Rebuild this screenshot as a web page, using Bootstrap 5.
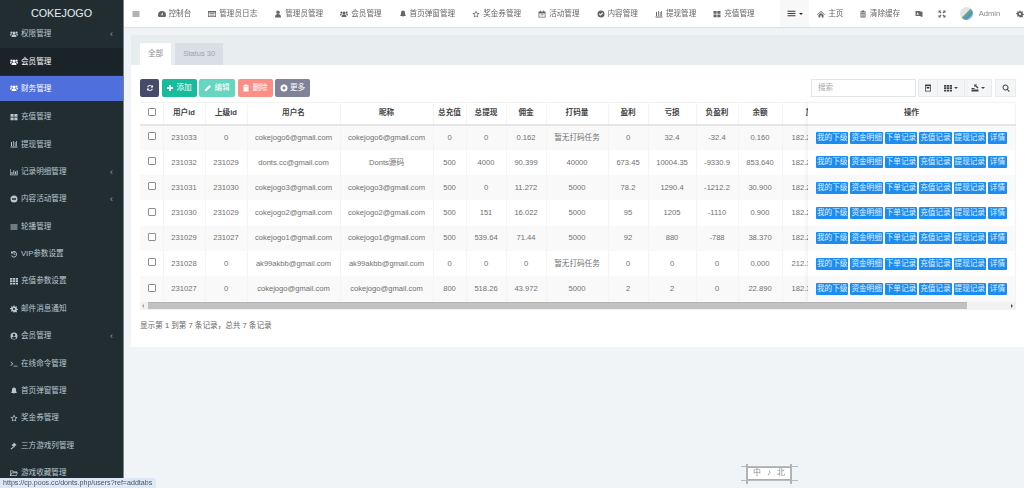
<!DOCTYPE html>
<html lang="zh-CN">
<head>
  <meta charset="UTF-8" />
  <title>COKEJOGO</title>
  <link href="https://cdn.jsdelivr.net/npm/bootstrap@5.3.3/dist/css/bootstrap.min.css" rel="stylesheet" />
  <style>
    html, body { height: 488px; overflow: hidden; }
    body { background: #f1f4f6; font: 7.6px/1.3 "Liberation Sans", "Noto Sans CJK SC", sans-serif; color: #666; }
    .ic { width: 8px; height: 8px; fill: currentColor; flex: none; }
    .soft { filter: blur(.35px); }

    .side { width: 124px; height: 488px; background: #222d32; border-right: 1px solid #7d8487; color: #b8c7ce; flex: none; overflow: hidden; }
    .side-logo { height: 27px; line-height: 26px; text-align: center; color: #e8eef0; font-size: 10.8px; }
    .side-item { height: 27.4px; padding-left: 10px; padding-right: 10px; gap: 3px; color: #b8c7ce; }
    .side-first { height: 21px; padding-bottom: 7px; }
    .side-hover { background: #1a2327; color: #fff; }
    .side-on { background: #4e6fdc; color: #fff; height: 25px; margin-top: .6px; margin-bottom: 2.4px; }
    .side-arrow { margin-left: auto; margin-top: 2px; color: #8aa4af; font-size: 9px; }

    .top { height: 27px; background: #fff; box-shadow: 0 1px 1px rgba(0,0,0,.08); color: #666; overflow: hidden; white-space: nowrap; }
    .top-item { padding: 0 8.5px; gap: 3px; height: 27px; }
    .top-first { padding: 0 9px 0 8px; }
    .top-burger { margin-left: 17px; padding: 0 6px 0 7px; background: #f8f8f8; color: #333; }
    .top-burger .ic { width: 9px; height: 9px; }
    .top-home { padding: 0 8px; }
    .top-clear { padding: 0 7.5px 0 7.5px; }
    .top-ico { padding: 0 7.5px; }
    .top-admin { gap: 6px; padding: 0 8px 0 6px; color: #888; }
    .top-gear { padding: 0 0 0 8px; }
    .caret-dn { width: 0; height: 0; border: 2px solid transparent; border-top-color: currentColor; border-bottom: 0; }
    .top-ava { width: 13px; height: 13px; border-radius: 50%; background: linear-gradient(135deg, #dfe5e8 45%, #6fae6a 50%, #4d8fcb 70%, #f4f6f7); }

    .panel { margin: 8px 0 0 7px; height: 312px; background: #fff; }
    .panel-tabs { height: 30px; background: #e8edf0; padding: 8px 0 0 9px; border: 0; gap: 4px; }
    .panel-tabs .nav-link { height: 22px; padding: 0 8px; line-height: 22px; font-size: 7.6px; border: 0; border-radius: 0; background: #d9dfe5; color: #99a3ad; margin: 0; }
    .panel-tabs .nav-link.active { background: #fff; color: #8b8b8b; }
    .panel-body { padding: 14px 8px 0 9px; }

    .tool-left { gap: 2.5px; }
    .tool-btn { height: 18px; padding: 0; font-size: 7.6px; color: #fff; border: 0; border-radius: 2px; gap: 2px; white-space: nowrap; justify-content: center; }
    .b-dark { background: #444c69; width: 19px; }
    .b-add { background: #18bc9c; width: 35px; }
    .b-edit { background: #66d6c0; width: 36px; }
    .b-del { background: #fb8f86; width: 35px; }
    .b-more { background: #7f8298; width: 35px; }
    .tool-in { width: 105px; height: 18px; border: 1px solid #e3e6e8; padding: 0 6px; color: #aaa; line-height: 16px; margin-right: 2px; }
    .tool-gray { height: 18px; background: #f4f5f6; border: 1px solid #e9ecee; color: #444; display: flex; align-items: center; justify-content: center; gap: 2px; }
    .tg-1 { width: 20px; }
    .tg-2, .tg-3 { width: 27px; border-left: 0; }
    .tg-s { width: 21px; margin-left: 3px; }

    .tbl-wrap { position: relative; margin-top: 5px; height: 200px; overflow: hidden; }
    .data-t { table-layout: fixed; width: 936px; margin: 0; border-collapse: collapse; font-size: 7.6px; color: #707070; }
    .data-t th, .data-t td { padding: 0; height: 25.3px; text-align: center; vertical-align: middle; border: 0; border-right: 1px solid #f4f4f4; white-space: nowrap; background: transparent; box-shadow: none; color: #707070; }
    .data-t th { height: 22px; font-weight: 700; color: #444; border-top: 1px solid #f2f2f2; border-bottom: 2px solid #e6e6e6; }
    .data-t tbody tr:nth-child(odd) td { background: #f9f9f9; }
    .data-t .cell-ip { text-align: left; padding-left: 9px; }
    .data-t .head-ip { text-align: left; padding-left: 23px; }
    .chk { display: inline-block; width: 8px; height: 8px; border: 1px solid #8f8f8f; border-radius: 1px; background: #fff; vertical-align: middle; margin-top: -3px; margin-left: 1px; }

    .fix-col { position: absolute; top: 0; right: 0; width: 208px; background: #fff; box-shadow: -1px 0 4px rgba(0,0,0,.07); }
    .fix-col .data-t { width: 208px; }
    .act-btns { display: flex; gap: 2px; padding-left: 8px; }
    .act-btn { width: 32.4px; height: 12px; line-height: 12px; background: #1a8df3; color: #e2f0fd; border: 0; border-radius: 1px; padding: 0; font-size: 7.6px; text-align: center; }
    .act-short { width: 19px; }

    .hbar { height: 8px; background: #f1f1f1; position: relative; width: 876px; }
    .hbar-thumb { position: absolute; left: 8px; top: 0; width: 819px; height: 7px; background: #c1c1c1; border-top: 1px solid #b5b5b5; }
    .hbar-l, .hbar-r { position: absolute; top: 2px; width: 0; height: 0; border: 2px solid transparent; }
    .hbar-l { left: 2px; border-right-color: #a3a3a3; border-left: 0; }
    .hbar-r { right: 3px; border-left-color: #505050; border-right: 0; }
    .tbl-foot { margin-top: 11px; color: #666; }

    .status-tip { position: fixed; left: 0; top: 478px; height: 10px; width: 156px; background: #dee8f5; color: #46566a; line-height: 10px; padding-left: 3px; border-top-right-radius: 3px; font-size: 7.1px; white-space: nowrap; }
    .ime-bar { position: fixed; left: 746px; top: 466px; width: 46px; height: 15px; background: #fff; border: 2px solid #a9adb0; border-width: 2px 1px; color: #8c8c8c; font-size: 8px; gap: 6px; }
    .ime-bar::before { content: ""; position: absolute; left: -6px; right: -7px; top: -2px; bottom: -2px; border-top: 1px solid #b9bcbe; border-bottom: 1px solid #b9bcbe; }
    .ime-bar::after { content: ""; position: absolute; left: -1px; right: -1px; top: -4px; bottom: -5px; border-left: 2px solid #b0b3b5; border-right: 2px solid #b0b3b5; }
  </style>
</head>
<body>
  <svg width="0" height="0" class="position-absolute">
    <symbol id="i-users" viewBox="0 0 16 16"><circle cx="8" cy="6" r="3"/><path d="M3 14c0-4 2-5 5-5s5 1 5 5z"/><circle cx="2.8" cy="5" r="2.2"/><circle cx="13.2" cy="5" r="2.2"/><path d="M0 11c0-3 1-4 3-4l1 1c-1 1-1.500 2-1.700 3zM16 11c0-3-1-4-3-4l-1 1c1 1 1.500 2 1.700 3z"/></symbol>
    <symbol id="i-dash" viewBox="0 0 16 16"><path d="M8 2a8 8 0 0 0-8 8c0 1.500.4 3 1 4h14c.6-1 1-2.500 1-4a8 8 0 0 0-8-8zm0 9a1.500 1.500 0 0 1-1.200-2.400L10 4.500l-.8 5A1.500 1.500 0 0 1 8 11z"/></symbol>
    <symbol id="i-list" viewBox="0 0 16 16"><path d="M0 2h16v12H0zm1.500 3v7.500h13V5zM3 6.500h10V8H3zm0 3h10V11H3z"/></symbol>
    <symbol id="i-user" viewBox="0 0 16 16"><circle cx="8" cy="4.500" r="3.500"/><path d="M2 15c0-5 2-7 6-7s6 2 6 7z"/></symbol>
    <symbol id="i-bell" viewBox="0 0 16 16"><path d="M8 1C5 1 4 3.500 4 6c0 3-1 4.500-2 6h12c-1-1.500-2-3-2-6 0-2.500-1-5-4-5zM6.300 13a1.800 1.800 0 0 0 3.400 0z"/></symbol>
    <symbol id="i-star" viewBox="0 0 16 16"><path d="M8 1l2.200 4.600 5 .7-3.600 3.500.9 5L8 12.400l-4.500 2.400.9-5L.8 6.300l5-.7zm0 3L6.700 6.900l-3.100.4 2.200 2.200-.5 3.100L8 11.100l2.700 1.500-.5-3.100 2.200-2.200-3.100-.4z"/></symbol>
    <symbol id="i-cal" viewBox="0 0 16 16"><path d="M1 3h3V1h1.500v2h5V1H12v2h3v12H1zm1.500 4v6.500h11V7zM5 9h6v1.500H5z"/></symbol>
    <symbol id="i-check" viewBox="0 0 16 16"><path d="M8 1a7 7 0 1 0 0 14A7 7 0 0 0 8 1zM7 11.500L3.800 8.300l1.400-1.400L7 8.700l3.800-3.800 1.400 1.400z"/></symbol>
    <symbol id="i-bank" viewBox="0 0 16 16"><path d="M1 13h14v2H1zM2 4h2v8H2zm4-2h1.500v10H6zm3.500 2H11v8H9.500zm3-2H14v10h-1.500z"/></symbol>
    <symbol id="i-large" viewBox="0 0 16 16"><path d="M1 2h6.300v5.500H1zm7.700 0H15v5.500H8.700zM1 8.800h6.300v5.500H1zm7.700 0H15v5.500H8.700z"/></symbol>
    <symbol id="i-th" viewBox="0 0 16 16"><path d="M0 2h4.500v3.500H0zm5.700 0h4.500v3.500H5.700zm5.800 0H16v3.500h-4.500zM0 6.700h4.500v3.500H0zm5.700 0h4.500v3.500H5.700zm5.800 0H16v3.500h-4.500zM0 11.400h4.500v3.500H0zm5.700 0h4.500v3.500H5.700zm5.800 0H16v3.500h-4.500z"/></symbol>
    <symbol id="i-chart" viewBox="0 0 16 16"><path d="M0 2h1.200v11H16v1.500H0zM3 8h2v4H3zm3.500-3h2v7h-2zM10 7h2v5h-2zm3.300-2h2v7h-2z"/></symbol>
    <symbol id="i-circle" viewBox="0 0 16 16"><path d="M8 1a7 7 0 1 0 0 14A7 7 0 0 0 8 1zM4 6.500h8V9.500H4z"/></symbol>
    <symbol id="i-bars" viewBox="0 0 16 16"><path d="M1 3h14v2H1zm0 4h14v2H1zm0 4h14v2H1z"/></symbol>
    <symbol id="i-hist" viewBox="0 0 16 16"><path d="M2 2l2 2a6 6 0 1 1-1.500 7.500l1.500-.8A4.400 4.400 0 1 0 5.200 5.200L7 7H2zM7.500 4.500H9V8l2.200 1.500-.8 1.200-2.900-2z"/></symbol>
    <symbol id="i-gear" viewBox="0 0 16 16"><path d="M7 1h2l.4 2 1.700.7 1.700-1.100 1.400 1.400-1.100 1.700.7 1.700 2 .4v2l-2 .4-.7 1.700 1.100 1.700-1.400 1.400-1.700-1.100-1.700.7L9 15H7l-.4-2-1.700-.7-1.700 1.100L1.800 12l1.100-1.700-.7-1.700-2-.4v-2l2-.4.7-1.700L1.800 4l1.400-1.400 1.700 1.100 1.700-.7zM8 5.800a2.200 2.200 0 1 0 0 4.400 2.200 2.200 0 0 0 0-4.400z"/></symbol>
    <symbol id="i-ucirc" viewBox="0 0 16 16"><path d="M8 1a7 7 0 1 0 0 14A7 7 0 0 0 8 1zm0 2.500a2.600 2.600 0 1 1 0 5.200 2.600 2.600 0 0 1 0-5.200zM3.500 12c.5-2 2-2.500 4.500-2.500s4 .5 4.500 2.500a6 6 0 0 1-9 0z"/></symbol>
    <symbol id="i-term" viewBox="0 0 16 16"><path d="M1 4l1-1 4.500 4.500L2 12l-1-1 3.500-3.500zM7 11.500h8V13H7z"/></symbol>
    <symbol id="i-gavel" viewBox="0 0 16 16"><path d="M8 1l5 5-1.500 1.500-.7-.7-1.800 1.800.8.800L8.300 11 3.200 6l1.500-1.500.8.700 1.800-1.800-.7-.7zM6 9.500l1.500 1.500L2.500 15 1 13.500z"/></symbol>
    <symbol id="i-folder" viewBox="0 0 16 16"><path d="M0 3h6l1.500 2H14v2h2l-3 7H0zm1.300 1.300v6.500L3.500 7H12.700V6.300H6.800L5.300 4.300zM4.300 8.300l-2.500 4.400h10.500l2-4.400z"/></symbol>
    <symbol id="i-refresh" viewBox="0 0 16 16"><path d="M8 2a6 6 0 0 1 4.200 1.800L14 2v5H9l2-2a4 4 0 0 0-6.800 1.800L2.300 6.200A6 6 0 0 1 8 2zM2 9h5l-2 2a4 4 0 0 0 6.800-1.800l1.900.6A6 6 0 0 1 3.800 12.200L2 14z"/></symbol>
    <symbol id="i-plus" viewBox="0 0 16 16"><path d="M6 2h4v4h4v4h-4v4H6v-4H2V6h4z"/></symbol>
    <symbol id="i-pencil" viewBox="0 0 16 16"><path d="M11 2l3 3-8.500 8.500L1.500 14.500l1-4z"/></symbol>
    <symbol id="i-trash" viewBox="0 0 16 16"><path d="M6 1h4l1 2h3v2H2V3h3zM3 6h10v9H3z"/></symbol>
    <symbol id="i-dot" viewBox="0 0 16 16"><path d="M8 1a7 7 0 1 0 0 14A7 7 0 0 0 8 1zm0 4a3 3 0 1 1 0 6 3 3 0 0 1 0-6z"/></symbol>
    <symbol id="i-home" viewBox="0 0 16 16"><path d="M8 2l8 7-1 1-7-6-7 6-1-1zM3 10l5-4 5 4v5H9.500v-4h-3v4H3z"/></symbol>
    <symbol id="i-trash2" viewBox="0 0 16 16"><path d="M6 1h4l1 2h3v1.500H2V3h3zM3 5.500h10V15H3zm2 1.500v6.500h1.300V7zm2.300 0v6.500h1.300V7zm2.400 0v6.500H11V7z"/></symbol>
    <symbol id="i-lang" viewBox="0 0 16 16"><path d="M1 2h8l6 2v10l-6-2H1zm4 2.500L3 10h1.200l.4-1.200h1.800l.4 1.200H8zM10 7h3.500v1H13c-.3 1.200-.9 2-1.500 2.500l-.6-.8c.5-.4.900-1 1.100-1.700H10z"/></symbol>
    <symbol id="i-expand" viewBox="0 0 16 16"><path d="M1 1h5L4.500 2.500 7 5 5 7 2.500 4.500 1 6zm14 0v5l-1.500-1.500L11 7 9 5l2.500-2.500L10 1zM1 15v-5l1.500 1.500L5 9l2 2-2.500 2.500L6 15zm14 0h-5l1.500-1.500L9 11l2-2 2.500 2.500L15 10z"/></symbol>
    <symbol id="i-cols" viewBox="0 0 16 16"><path d="M2 1h12v14H2zm1.500 3v9.500h9V4zM5 5.500h6V9H5z"/></symbol>
    <symbol id="i-export" viewBox="0 0 16 16"><path d="M1 11h14v4H1zM6 1h6l-1.500 2L15 7l-2 2-4.500-4.500L7 6zM1 8h6v2H1z"/></symbol>
    <symbol id="i-search" viewBox="0 0 16 16"><path d="M7 1a6 6 0 0 1 4.800 9.600l3.700 3.700-1.500 1.500-3.700-3.700A6 6 0 1 1 7 1zm0 2a4 4 0 1 0 0 8 4 4 0 0 0 0-8z"/></symbol>
  </svg>

  <div class="d-flex soft">
    <aside class="side">
      <div class="side-logo">COKEJOGO</div>
      <div id="sideMenu"></div>
    </aside>

    <main class="flex-grow-1 overflow-hidden">
      <nav class="top d-flex align-items-center" id="topNav"></nav>

      <section class="panel">
        <ul class="nav nav-tabs panel-tabs">
          <li class="nav-item"><a class="nav-link active" href="#">全部</a></li>
          <li class="nav-item"><a class="nav-link" href="#">Status 30</a></li>
        </ul>
        <div class="panel-body">
          <div class="d-flex">
            <div class="d-flex tool-left flex-grow-1">
              <button class="btn tool-btn d-flex align-items-center b-dark"><svg class="ic"><use href="#i-refresh"/></svg></button>
              <button class="btn tool-btn d-flex align-items-center b-add"><svg class="ic"><use href="#i-plus"/></svg>添加</button>
              <button class="btn tool-btn d-flex align-items-center b-edit"><svg class="ic"><use href="#i-pencil"/></svg>编辑</button>
              <button class="btn tool-btn d-flex align-items-center b-del"><svg class="ic"><use href="#i-trash"/></svg>删除</button>
              <button class="btn tool-btn d-flex align-items-center b-more"><svg class="ic"><use href="#i-dot"/></svg>更多</button>
            </div>
            <div class="tool-in">搜索</div>
            <div class="tool-gray tg-1"><svg class="ic"><use href="#i-cols"/></svg></div>
            <div class="tool-gray tg-2"><svg class="ic"><use href="#i-th"/></svg><span class="caret-dn"></span></div>
            <div class="tool-gray tg-3"><svg class="ic"><use href="#i-export"/></svg><span class="caret-dn"></span></div>
            <div class="tool-gray tg-s"><svg class="ic"><use href="#i-search"/></svg></div>
          </div>

          <div class="tbl-wrap">
            <table class="table data-t">
              <colgroup>
                <col style="width:23px"><col style="width:42px"><col style="width:42px"><col style="width:93px"><col style="width:93px"><col style="width:33px"><col style="width:40px"><col style="width:40px"><col style="width:62px"><col style="width:40px"><col style="width:48px"><col style="width:42px"><col style="width:44px"><col style="width:68px"><col style="width:226px">
              </colgroup>
              <thead><tr id="dataHead"></tr></thead>
              <tbody id="dataBody"></tbody>
            </table>
            <div class="fix-col">
              <table class="table data-t">
                <thead><tr><th>操作</th></tr></thead>
                <tbody id="fixBody"></tbody>
              </table>
            </div>
          </div>
          <div class="hbar"><span class="hbar-l"></span><span class="hbar-thumb"></span><span class="hbar-r"></span></div>
          <div class="tbl-foot">显示第 1 到第 7 条记录，总共 7 条记录</div>
        </div>
      </section>
    </main>
  </div>

  <div class="status-tip soft">https://cp.poos.cc/donts.php/users?ref=addtabs</div>
  <div class="ime-bar d-flex align-items-center justify-content-center soft"><span>中</span><span>♪</span><span>北</span></div>

  <script>
    function icono(nombre) {
      return `<svg class="ic"><use href="#i-${nombre}"/></svg>`;
    }

    const menu = [
      ['users', '权限管理', 1, 'side-first'], ['users', '会员管理', 0, 'side-hover'], ['users', '财务管理', 0, 'side-on'],
      ['large', '充值管理'], ['bank', '提现管理'], ['chart', '记录明细管理', 1], ['circle', '内容活动管理', 1],
      ['bars', '轮播管理'], ['hist', 'VIP参数设置'], ['th', '充值参数设置'], ['gear', '邮件消息通知'],
      ['ucirc', '会员管理', 1], ['term', '在线命令管理'], ['bell', '首页弹窗管理'], ['star', '奖金券管理'],
      ['gavel', '三方游戏列管理'], ['folder', '游戏收藏管理']
    ];
    document.getElementById('sideMenu').innerHTML = menu.map(([ic, txt, flecha, cls]) =>
      `<div class="side-item d-flex align-items-center ${cls || ''}">${icono(ic)}<span>${txt}</span>${flecha ? '<span class="side-arrow">‹</span>' : ''}</div>`
    ).join('');

    const nav = [
      ['dash', '控制台'], ['list', '管理员日志'], ['user', '管理员管理'], ['users', '会员管理'], ['bell', '首页弹窗管理'],
      ['star', '奖金券管理'], ['cal', '活动管理'], ['check', '内容管理'], ['bank', '提现管理'], ['large', '充值管理']
    ];
    let navHtml = `<div class="top-item top-first d-flex align-items-center">${icono('bars')}</div>`;
    navHtml += nav.map(([ic, txt]) => `<div class="top-item d-flex align-items-center">${icono(ic)}<span>${txt}</span></div>`).join('');
    navHtml += `<div class="top-item top-burger d-flex align-items-center">${icono('bars')}<span class="caret-dn"></span></div>`;
    navHtml += `<div class="top-item top-home d-flex align-items-center">${icono('home')}<span>主页</span></div>`;
    navHtml += `<div class="top-item top-clear d-flex align-items-center">${icono('trash2')}<span>清除缓存</span></div>`;
    navHtml += `<div class="top-item top-ico d-flex align-items-center">${icono('lang')}</div>`;
    navHtml += `<div class="top-item top-ico d-flex align-items-center">${icono('expand')}</div>`;
    navHtml += `<div class="top-item top-admin d-flex align-items-center"><span class="top-ava"></span><span>Admin</span></div>`;
    navHtml += `<div class="top-item top-gear d-flex align-items-center">${icono('gear')}</div>`;
    document.getElementById('topNav').innerHTML = navHtml;

    const cols = ['', '用户id', '上级id', '用户名', '昵称', '总充值', '总提现', '佣金', '打码量', '盈利', '亏损', '负盈利', '余额', '加', ''];
    document.getElementById('dataHead').innerHTML = cols.map((c, i) =>
      `<th${i === 13 ? ' class="head-ip"' : ''}>${i === 0 ? '<span class="chk"></span>' : c}</th>`
    ).join('');

    const sinTarea = '暂无打码任务';
    const filas = [
      ['231033', '0', 'cokejogo6@gmail.com', 'cokejogo6@gmail.com', '0', '0', '0.162', sinTarea, '0', '32.4', '-32.4', '0.160', '182.2'],
      ['231032', '231029', 'donts.cc@gmail.com', 'Donts源码', '500', '4000', '90.399', '40000', '673.45', '10004.35', '-9330.9', '853.640', '182.2'],
      ['231031', '231030', 'cokejogo3@gmail.com', 'cokejogo3@gmail.com', '500', '0', '11.272', '5000', '78.2', '1290.4', '-1212.2', '30.900', '182.2'],
      ['231030', '231029', 'cokejogo2@gmail.com', 'cokejogo2@gmail.com', '500', '151', '16.022', '5000', '95', '1205', '-1110', '0.900', '182.2'],
      ['231029', '231027', 'cokejogo1@gmail.com', 'cokejogo1@gmail.com', '500', '539.64', '71.44', '5000', '92', '880', '-788', '38.370', '182.2'],
      ['231028', '0', 'ak99akbb@gmail.com', 'ak99akbb@gmail.com', '0', '0', '0', sinTarea, '0', '0', '0', '0.000', '212.1'],
      ['231027', '0', 'cokejogo@gmail.com', 'cokejogo@gmail.com', '800', '518.26', '43.972', '5000', '2', '2', '0', '22.890', '182.3']
    ];
    document.getElementById('dataBody').innerHTML = filas.map(f =>
      `<tr><td><span class="chk"></span></td>${f.map((v, i) => `<td${i === 12 ? ' class="cell-ip"' : ''}>${v}</td>`).join('')}<td></td></tr>`
    ).join('');

    const acciones = ['我的下级', '资金明细', '下单记录', '充值记录', '提现记录'];
    const botones = acciones.map(a => `<button class="act-btn">${a}</button>`).join('') + '<button class="act-btn act-short">详情</button>';
    document.getElementById('fixBody').innerHTML = filas.map(() => `<tr><td><div class="act-btns">${botones}</div></td></tr>`).join('');
  </script>
</body>
</html>
